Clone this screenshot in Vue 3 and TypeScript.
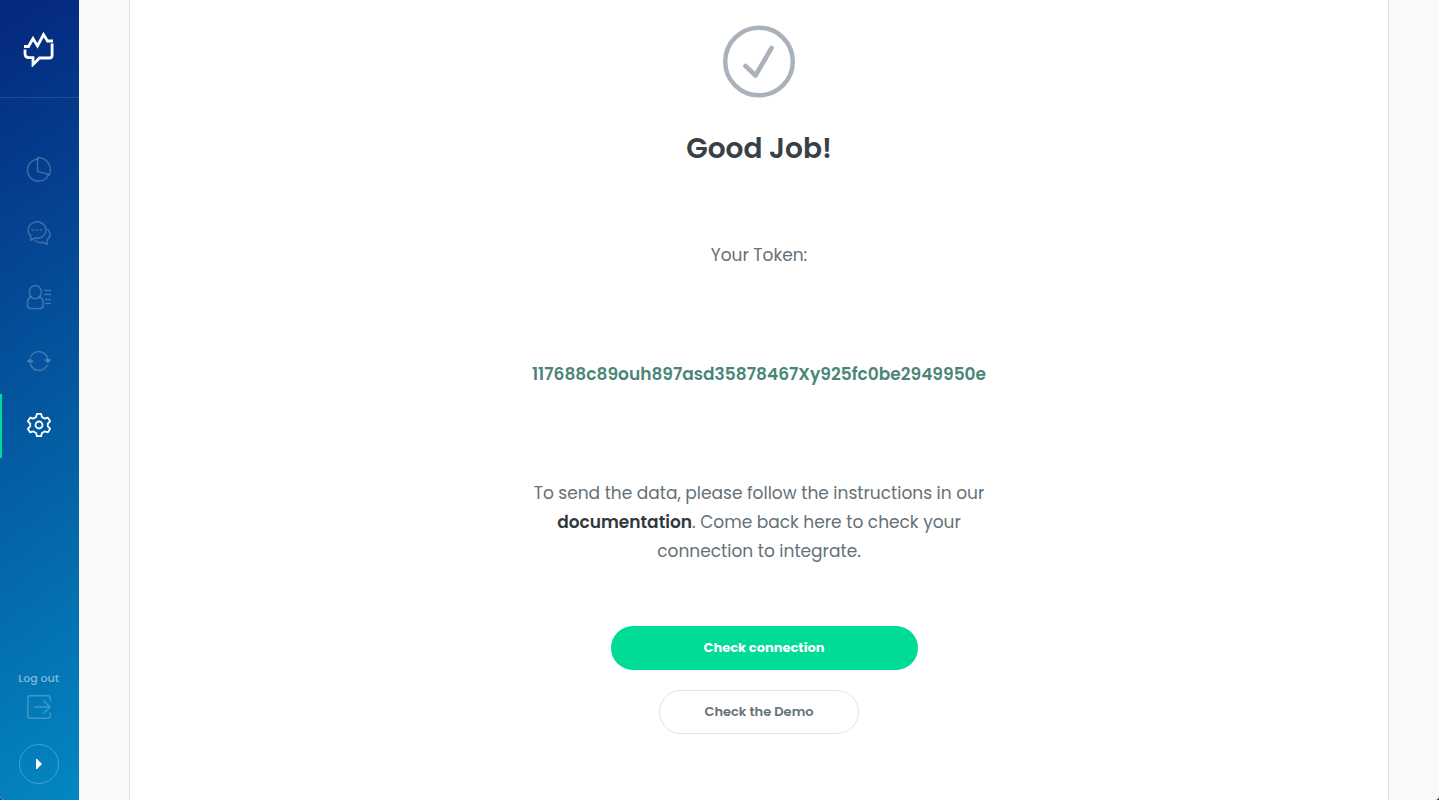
<script setup lang="ts">
import { ref } from 'vue'

interface NavItem {
  id: string
  label: string
  paths: string[]
}

const navItems: NavItem[] = [
  {
    id: 'stats',
    label: 'Statistics',
    paths: [
      'M10.500 2.200A11 11 0 1 0 21.500 17.800',
      'M10.500.6V14.200L22.500 17.800A12.600 12.600 0 0 0 10.500.6Z'
    ]
  },
  {
    id: 'chats',
    label: 'Conversations',
    paths: [
      'M3.700 14.800A8.900 8.200 0 1 1 7.800 17L4 19.300Z',
      'M5.200 9h1M9.200 9h1M13.200 9h1',
      'M20.700 8.500c3.300 3 3.300 7.700-.8 10.600l.2 4.300-3.700-2.100c-3.200.700-6.400.100-8.400-1.800'
    ]
  },
  {
    id: 'contacts',
    label: 'Contacts',
    paths: [
      'M8.300.500c3.600 0 6 3 6 6.600s-2.400 6.600-6 6.600-6-3-6-6.600 2.400-6.600 6-6.600Z',
      'M3.800 12C1.500 13 .5 14.800.5 17.100v3.400c0 1.900 1 2.900 2.800 2.900h10c1.800 0 2.800-1 2.800-2.900v-3.400c0-2.300-1-4.100-3.300-5.100',
      'M17.500 5.500h6M17.500 9.500h6M18.500 14.500h5M18.500 18.500h5'
    ]
  },
  {
    id: 'sync',
    label: 'Synchronise',
    paths: [
      'M4 7.500A9 9 0 0 1 21 12M20 16.500A9 9 0 0 1 3 12',
      'M18 11h5.500l-2.700 2.500ZM.500 12.500H6L3.200 10Z'
    ]
  },
  {
    id: 'settings',
    label: 'Settings',
    paths: [
      'M9.900.8h4.200l.8 3.200 2.700 1.600 3.300-1 2.200 3.700-2.300 2.300v2.800l2.300 2.300-2.200 3.700-3.300-1-2.700 1.600-.8 3.200H9.900L9.100 20l-2.700-1.600-3.300 1L.9 15.700l2.300-2.300v-2.800L.9 8.300l2.200-3.700 3.300 1L9.100 4Z',
      'M12 8.500a3.500 3.500 0 1 1 0 7 3.500 3.500 0 0 1 0-7Z'
    ]
  }
]

const active = ref('settings')
const token = '117688c89ouh897asd35878467Xy925fc0be2949950e'
</script>

<template>
  <div class="app">
    <aside class="sidebar">
      <a class="brand" href="#" aria-label="Home">
        <svg width="32" height="36" viewBox="0 0 32 36" fill="none" stroke="#fff" stroke-width="2.800">
          <path d="M1 15.500h4.500L10 7.500l4.500 7.500L20.500 3.500l4 6.500H30" />
          <path d="M2 18.500v4c0 2.800 1.500 4.200 4.200 4.200H10V33.500l6.500-6.500h9.800c1.900 0 2.800-1 2.800-2.800V12.500" />
        </svg>
      </a>
      <nav class="nav">
        <a
          v-for="item in navItems"
          :key="item.id"
          href="#"
          class="nav-item"
          :class="{ active: item.id === active }"
          :aria-label="item.label"
          @click.prevent="active = item.id"
        >
          <svg width="24" height="24" viewBox="0 0 24 24">
            <path v-for="d in item.paths" :key="d" :d="d" />
          </svg>
        </a>
      </nav>
      <div class="sidebar-foot">
        <a class="logout" href="#">
          <span>Log out</span>
          <svg width="24" height="24" viewBox="0 0 24 24">
            <path d="M23.200 6V3.200C23.200 1.600 22.400.8 20.800.8H3.200C1.600.8.8 1.600.8 3.200v17.600c0 1.600.8 2.400 2.400 2.400h17.600c1.600 0 2.400-.8 2.400-2.400V18" />
            <path d="M8 12h15M17 6l6 6-6 6" />
          </svg>
        </a>
        <button class="expand" type="button" aria-label="Expand menu">
          <svg width="6" height="10" viewBox="0 0 6 10"><path d="M0 0h1l5 5-5 5H0Z" fill="#fff" /></svg>
        </button>
      </div>
    </aside>

    <main class="content">
      <section class="card">
        <svg class="check" width="72" height="72" viewBox="0 0 72 72" fill="none" stroke="#a9b1ba" stroke-linecap="round" stroke-linejoin="round">
          <circle cx="36" cy="36.500" r="33.800" stroke-width="4.400" />
          <path d="M22.500 41L32.500 50.500L48.500 23" stroke-width="4.600" />
        </svg>
        <h1>Good Job!</h1>
        <p class="label">Your Token:</p>
        <p class="token">{{ token }}</p>
        <p class="hint">
          To send the data, please follow the instructions in our
          <a href="#">documentation</a>. Come back here to check your connection to integrate.
        </p>
        <button class="btn primary" type="button">Check connection</button>
        <button class="btn outline" type="button">Check the Demo</button>
      </section>
    </main>
  </div>
</template>

<style>
body {
  margin: 0;
  background: #25282b;
}
</style>

<style scoped>
.app {
  display: flex;
  min-height: 100vh;
  border-radius: 0 0 4px 4px;
  overflow: hidden;
  background: #f8faf9;
  font-family: Poppins, Inter, "Open Sans", sans-serif;
  color: #667077;
}

.sidebar {
  display: flex;
  flex-direction: column;
  flex: 0 0 79px;
  background: linear-gradient(145deg, #05277d, #0387c1);
}

.brand {
  display: flex;
  align-items: center;
  justify-content: center;
  height: 97px;
  padding-right: 1px;
  border-bottom: 1px solid rgba(255, 255, 255, 0.12);
}

.nav {
  display: flex;
  flex-direction: column;
  margin-top: 40px;
}

.nav-item {
  display: flex;
  align-items: center;
  justify-content: center;
  height: 62px;
  padding: 0 3px 2px 0;
  border-left: 2px solid transparent;
  color: rgba(255, 255, 255, 0.23);
}

.nav-item.active {
  border-left-color: #00dc96;
  color: #fff;
}

.nav-item svg,
.logout svg {
  overflow: visible;
  fill: none;
  stroke: currentColor;
  stroke-width: 1.5px;
  stroke-linecap: round;
  stroke-linejoin: round;
}

.nav-item.active svg {
  stroke-width: 1.8px;
}

.sidebar-foot {
  display: flex;
  flex-direction: column;
  align-items: center;
  gap: 25px;
  margin-top: auto;
  padding: 0 1px 16px 0;
}

.logout {
  display: flex;
  flex-direction: column;
  align-items: center;
  gap: 8px;
  padding-right: 1px;
  color: rgba(255, 255, 255, 0.23);
  font-size: 11px;
  line-height: 18px;
  text-decoration: none;
}

.logout span {
  color: rgba(255, 255, 255, 0.5);
  font-weight: 500;
}

.expand {
  display: flex;
  align-items: center;
  justify-content: center;
  width: 40px;
  height: 40px;
  padding: 0;
  border: 1px solid rgba(255, 255, 255, 0.25);
  border-radius: 50%;
  background: none;
}

.content {
  display: flex;
  flex: 1;
  padding: 0 50px;
}

.card {
  display: flex;
  flex: 1;
  flex-direction: column;
  align-items: center;
  padding: 25px 24px 64px;
  border: solid #dde4ea;
  border-width: 0 1px;
  background: #fff;
  text-align: center;
}

.check {
  flex: none;
  overflow: visible;
}

h1 {
  margin: 34px 0 0;
  color: #374047;
  font-size: 28px;
  font-weight: 600;
  line-height: 36px;
}

p {
  margin: 0;
  font-size: 17px;
  line-height: 29px;
}

.label {
  margin-top: 74px;
}

.token {
  margin-top: 90px;
  color: #4a8578;
  font-weight: 600;
}

.hint {
  max-width: 470px;
  margin-top: 90px;
}

.hint a {
  color: #30383e;
  font-weight: 600;
  text-decoration: none;
}

.btn {
  height: 44px;
  padding: 0 0 1px;
  border-radius: 22px;
  font-family: inherit;
  font-size: 13px;
}

.primary {
  width: 307px;
  margin: 60px 0 0 10px;
  border: 0;
  background: #00dc96;
  color: #fff;
  font-weight: 700;
}

.outline {
  width: 200px;
  margin-top: 20px;
  border: 1px solid #dfe4ec;
  background: #fff;
  color: #667077;
  font-weight: 600;
}
</style>
